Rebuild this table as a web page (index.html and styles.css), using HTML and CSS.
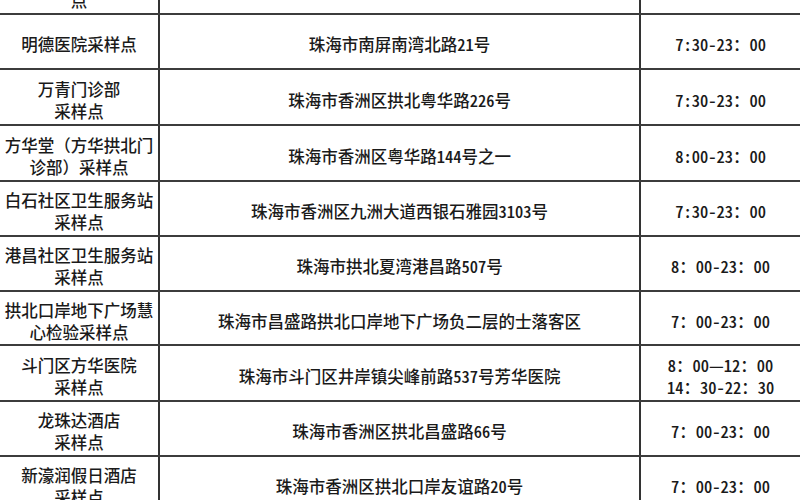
FILE: index.html
```html
<!DOCTYPE html>
<html lang="zh-CN">
<head>
<meta charset="utf-8">
<title>采样点</title>
<link rel="stylesheet" href="styles.css">
</head>
<body>
<div class="table">
  <div class="row">
    <div class="c name">珠海市人民医院采样<br>点</div>
    <div class="c addr peek">珠海市香洲区康宁路79号门诊楼</div>
    <div class="c time peek">7:30-23：00</div>
  </div>
  <div class="row">
    <div class="c name">明德医院采样点</div>
    <div class="c addr">珠海市南屏南湾北路21号</div>
    <div class="c time">7:30-23：00</div>
  </div>
  <div class="row t">
    <div class="c name">万青门诊部<br>采样点</div>
    <div class="c addr">珠海市香洲区拱北粤华路226号</div>
    <div class="c time">7:30-23：00</div>
  </div>
  <div class="row t">
    <div class="c name">方华堂（方华拱北门<br>诊部）采样点</div>
    <div class="c addr">珠海市香洲区粤华路144号之一</div>
    <div class="c time">8:00-23：00</div>
  </div>
  <div class="row">
    <div class="c name">白石社区卫生服务站<br>采样点</div>
    <div class="c addr">珠海市香洲区九洲大道西银石雅园3103号</div>
    <div class="c time">7:30-23：00</div>
  </div>
  <div class="row">
    <div class="c name">港昌社区卫生服务站<br>采样点</div>
    <div class="c addr">珠海市拱北夏湾港昌路507号</div>
    <div class="c time">8：00-23：00</div>
  </div>
  <div class="row s">
    <div class="c name">拱北口岸地下广场慧<br>心检验采样点</div>
    <div class="c addr">珠海市昌盛路拱北口岸地下广场负二层的士落客区</div>
    <div class="c time">7：00-23：00</div>
  </div>
  <div class="row t">
    <div class="c name">斗门区方华医院<br>采样点</div>
    <div class="c addr">珠海市斗门区井岸镇尖峰前路537号芳华医院</div>
    <div class="c time">8：00—12：00<br>14：30-22：30</div>
  </div>
  <div class="row">
    <div class="c name">龙珠达酒店<br>采样点</div>
    <div class="c addr">珠海市香洲区拱北昌盛路66号</div>
    <div class="c time">7：00-23：00</div>
  </div>
  <div class="row">
    <div class="c name">新濠润假日酒店<br>采样点</div>
    <div class="c addr">珠海市香洲区拱北口岸友谊路20号</div>
    <div class="c time">7：00-23：00</div>
  </div>
</div>
</body>
</html>
```
FILE: styles.css
```css
html, body {
  margin: 0;
  padding: 0;
  background: #ffffff;
  overflow: hidden;
}

body {
  width: 800px;
  height: 500px;
  font-family: "Noto Sans CJK SC", "Noto Sans", sans-serif;
  font-size: 16.5px;
  font-weight: 500;
  line-height: 22px;
  color: #1a1a1a;
}

.table {
  margin-top: -40px;
  width: 800px;
}

.row {
  display: grid;
  grid-template-columns: 160px 481px 159px;
  height: 55px;
  box-sizing: border-box;
  border-bottom: 2px solid #3c3c3c;
}

.row.t {
  height: 56px;
}

.row.s {
  height: 54px;
}

.c {
  display: flex;
  align-items: center;
  justify-content: center;
  text-align: center;
  padding-top: 5px;
  box-sizing: border-box;
  white-space: nowrap;
  overflow: hidden;
}

.addr,
.time {
  font-feature-settings: "hwid" 1;
}

.name,
.addr {
  border-right: 2px solid #333333;
}

.c.peek {
  padding-top: 8px;
}
```
